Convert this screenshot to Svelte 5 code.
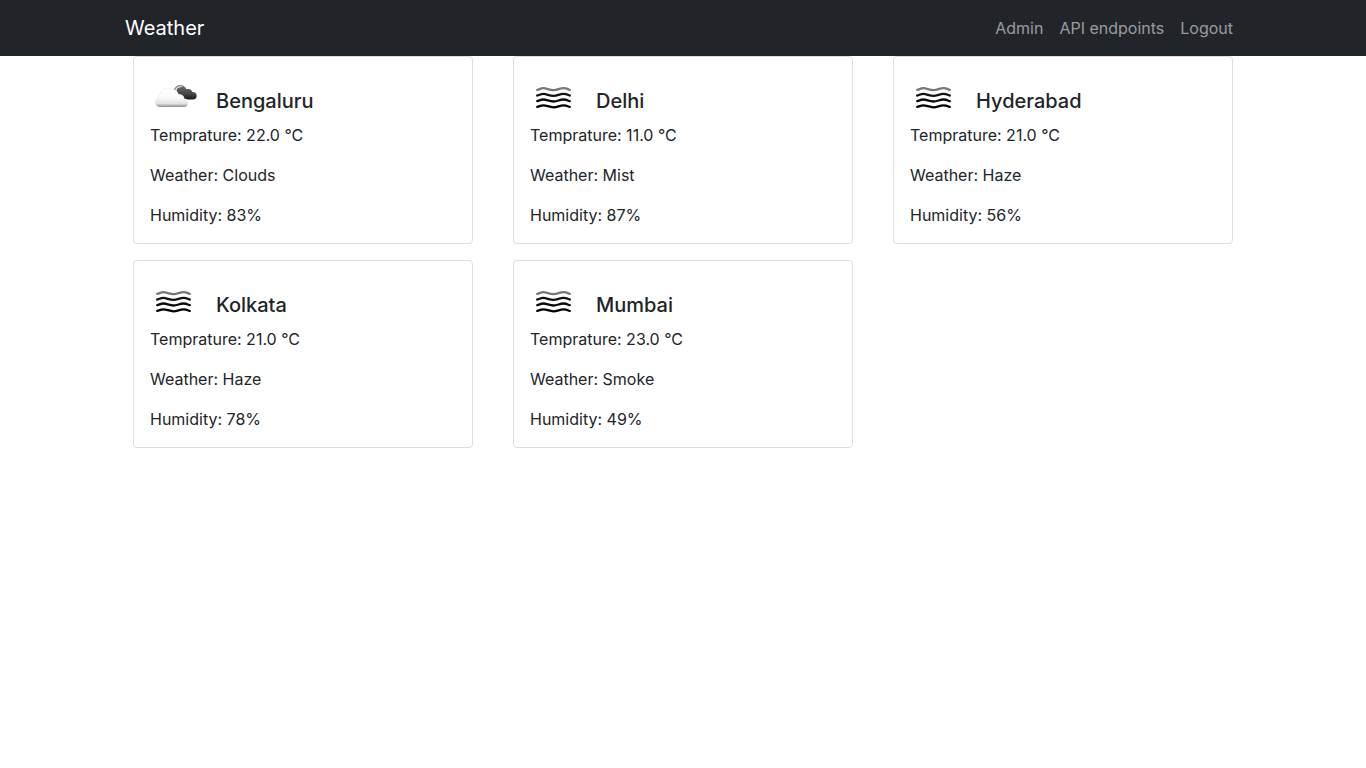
<script>
  const cities = [
    { name: 'Bengaluru', icon: 'clouds', temperature: '22.0', weather: 'Clouds', humidity: 83 },
    { name: 'Delhi', icon: 'mist', temperature: '11.0', weather: 'Mist', humidity: 87 },
    { name: 'Hyderabad', icon: 'mist', temperature: '21.0', weather: 'Haze', humidity: 56 },
    { name: 'Kolkata', icon: 'mist', temperature: '21.0', weather: 'Haze', humidity: 78 },
    { name: 'Mumbai', icon: 'mist', temperature: '23.0', weather: 'Smoke', humidity: 49 }
  ];

  const wave = 'M7.2 0.6 C9.5 0.2 10.5 -1 13.5 -1 S19.5 1 23.5 1 S29.5 -1 33.5 -1 S37.5 0.2 39.8 0.6';
  const waves = [
    { y: 16.2, color: '#777' },
    { y: 21.9, color: '#111' },
    { y: 27.5, color: '#0a0a0a' },
    { y: 33.3, color: '#000' }
  ];
</script>

<nav class="navbar">
  <div class="container bar">
    <a class="brand" href="#home">Weather</a>
    <ul class="links">
      <li><a href="#admin">Admin</a></li>
      <li><a href="#api">API endpoints</a></li>
      <li><a href="#logout">Logout</a></li>
    </ul>
  </div>
</nav>

<main class="container grid">
  {#each cities as city (city.name)}
    <article class="card">
      <header class="head">
        {#if city.icon === 'clouds'}
          <svg class="icon" viewBox="0 0 50 50" aria-hidden="true">
            <defs>
              <linearGradient id="dark" x1="0" y1="0" x2="0" y2="1">
                <stop offset="0" stop-color="#666" />
                <stop offset="0.6" stop-color="#444" />
                <stop offset="1" stop-color="#151515" />
              </linearGradient>
              <linearGradient id="light" x1="0" y1="0" x2="0" y2="1">
                <stop offset="0" stop-color="#fff" />
                <stop offset="0.5" stop-color="#fafafa" />
                <stop offset="0.82" stop-color="#e2e2e2" />
                <stop offset="1" stop-color="#8c8c8c" />
              </linearGradient>
            </defs>
            <path d="M24.3 18.8 C24.4 15 27.2 12.5 30.6 12.6 C32.6 12.7 34.2 13.5 35 15" fill="none" stroke="#777" stroke-width="1.1" />
            <path d="M26.6 18 C26.2 15.6 28.4 13.9 31 14.2 C33.2 13.2 35.8 14.1 36.5 16.3 C39.2 15.2 41.9 16.6 42.2 19.1 C45 18.9 46.7 20.5 46.7 22.7 C46.7 24.9 45.2 26.6 42.7 26.6 H32 Z" fill="url(#dark)" />
            <path d="M10.5 34 C7.4 34 5.5 32 5.5 29.4 C5.5 27.3 6.5 25.8 8.3 25.1 C7.4 22.6 8.6 20 11.2 19.6 C11.8 16.9 13.9 15.1 16.6 15.1 C18.6 15.1 20.2 16 21.1 17.5 C24.6 16.7 27.5 18.8 27.8 22 C31.1 21.2 34 23.2 33.9 26 C36.5 26.1 37.9 27.7 37.9 29.9 C37.9 32.3 36.3 34 33.6 34 Z" fill="url(#light)" stroke="#fff" stroke-width="1.2" paint-order="stroke" />
            <path d="M10.5 34 C7.4 34 5.5 32 5.5 29.4 C5.5 27.3 6.5 25.8 8.3 25.1 C7.4 22.6 8.6 20 11.2 19.6 C11.8 16.9 13.9 15.1 16.6 15.1 C18.6 15.1 20.2 16 21.1 17.5" fill="none" stroke="#888" stroke-opacity="0.22" stroke-width="0.6" />
          </svg>
        {:else}
          <svg class="icon" viewBox="0 0 50 50" aria-hidden="true">
            {#each waves as { y, color } (y)}
              <path d={wave} transform="translate(0 {y})" fill="none" stroke={color} stroke-width="2.3" stroke-linecap="round" />
            {/each}
          </svg>
        {/if}
        <h5>{city.name}</h5>
      </header>
      <p>Temprature: {city.temperature} °C</p>
      <p>Weather: {city.weather}</p>
      <p>Humidity: {city.humidity}%</p>
    </article>
  {/each}
</main>

<style>
  :global(body) {
    margin: 0;
    background: #fff;
    color: #212529;
    font-family: Inter, sans-serif;
    font-size: 16px;
    line-height: 24px;
  }

  .container {
    box-sizing: border-box;
    width: 100%;
    max-width: 1140px;
    margin: 0 auto;
  }

  .navbar {
    padding: 8px 0;
    background: #212529;
  }

  .bar {
    display: flex;
    flex-wrap: wrap;
    align-items: center;
    justify-content: space-between;
    padding: 0 12px;
  }

  .brand {
    padding: 5px 0;
    color: #fff;
    font-size: 20px;
    line-height: 30px;
    text-decoration: none;
  }

  .links {
    display: flex;
    margin: 0;
    padding: 0;
    list-style: none;
  }

  .links a {
    display: block;
    padding: 8px;
    color: rgba(255, 255, 255, 0.55);
    text-decoration: none;
  }

  .links a:hover {
    color: rgba(255, 255, 255, 0.75);
  }

  .grid {
    display: grid;
    grid-template-columns: repeat(auto-fill, minmax(300px, 1fr));
    gap: 16px 40px;
    padding: 0 20px;
  }

  .card {
    padding: 16px;
    border: 1px solid #dfdfdf;
    border-radius: 4px;
    background: #fff;
  }

  .head {
    display: flex;
    gap: 16px;
  }

  .icon {
    width: 50px;
    height: 50px;
    flex: none;
  }

  h5 {
    margin: 16px 0 0;
    font-size: 20px;
    font-weight: 500;
    line-height: 24px;
  }

  p {
    margin: 0 0 16px;
  }

  p:last-child {
    margin-bottom: 0;
  }
</style>
